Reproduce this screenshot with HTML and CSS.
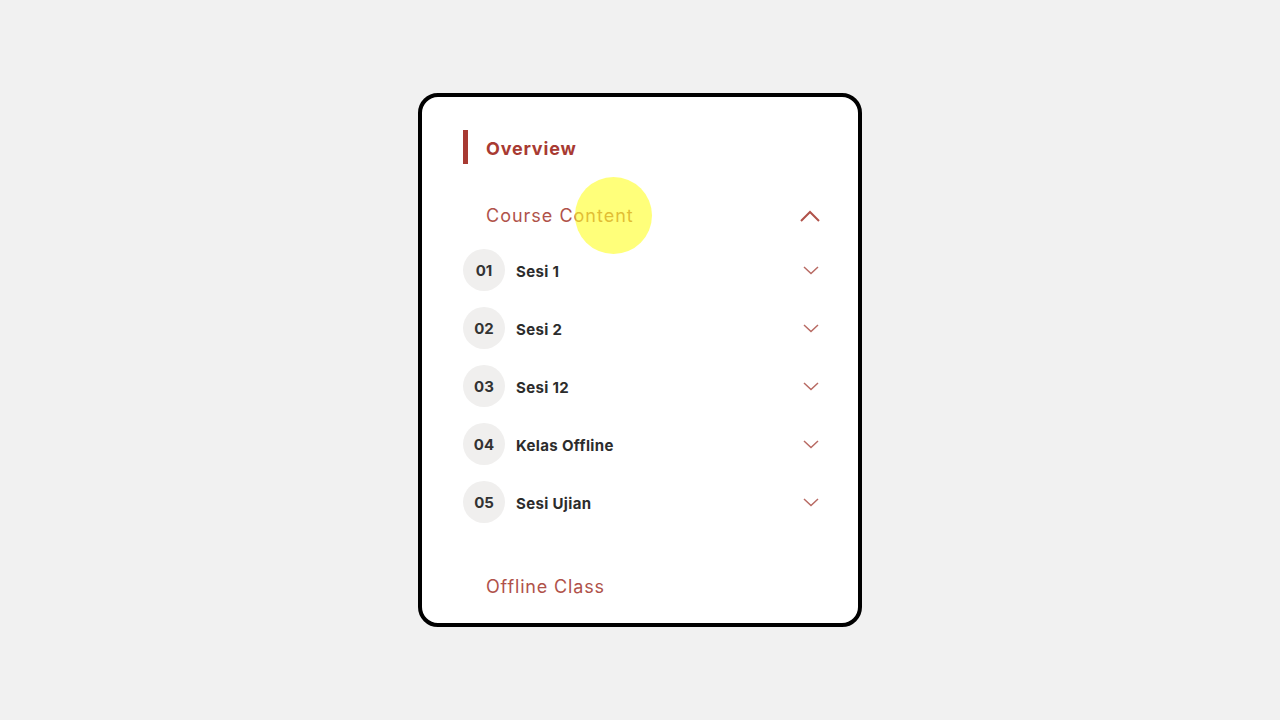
FILE: index.html
```html
<!DOCTYPE html>
<html lang="en">
<head>
    <meta charset="UTF-8">
    <meta name="viewport" content="width=device-width, initial-scale=1.0">
    <title>Course Menu</title>
    <link rel="stylesheet" href="styles.css">
</head>
<body>
    <div class="card">
        <!-- Active tab -->
        <div class="overview">Overview</div>

        <!-- Course content section -->
        <div class="section-head">
            <span>Course Content</span>
            <svg class="chev-up" width="22" height="12" viewBox="0 0 22 12">
                <path d="M2 11 L11 2 L20 11" fill="none" stroke="#b0524a" stroke-width="2"/>
            </svg>
            <div class="cursor-dot"></div>
        </div>

        <div class="sessions">
            <div class="session">
                <div class="num">01</div>
                <div class="label">Sesi 1</div>
                <svg class="chev" width="16" height="9" viewBox="0 0 16 9"><path d="M1 1 L8 7.5 L15 1" fill="none" stroke="#b86a63" stroke-width="1.5"/></svg>
            </div>
            <div class="session">
                <div class="num">02</div>
                <div class="label">Sesi 2</div>
                <svg class="chev" width="16" height="9" viewBox="0 0 16 9"><path d="M1 1 L8 7.5 L15 1" fill="none" stroke="#b86a63" stroke-width="1.5"/></svg>
            </div>
            <div class="session">
                <div class="num">03</div>
                <div class="label">Sesi 12</div>
                <svg class="chev" width="16" height="9" viewBox="0 0 16 9"><path d="M1 1 L8 7.5 L15 1" fill="none" stroke="#b86a63" stroke-width="1.5"/></svg>
            </div>
            <div class="session">
                <div class="num">04</div>
                <div class="label">Kelas Offline</div>
                <svg class="chev" width="16" height="9" viewBox="0 0 16 9"><path d="M1 1 L8 7.5 L15 1" fill="none" stroke="#b86a63" stroke-width="1.5"/></svg>
            </div>
            <div class="session">
                <div class="num">05</div>
                <div class="label">Sesi Ujian</div>
                <svg class="chev" width="16" height="9" viewBox="0 0 16 9"><path d="M1 1 L8 7.5 L15 1" fill="none" stroke="#b86a63" stroke-width="1.5"/></svg>
            </div>
        </div>

        <div class="section-link">Offline Class</div>
    </div>
</body>
</html>
```

FILE: styles.css
```css
body {
    font-family: Inter, "Noto Sans", sans-serif;
    margin: 0;
    background: #f1f1f1;
    height: 100vh;
    display: flex;
    justify-content: center;
    align-items: center;
}
.card {
    box-sizing: border-box;
    width: 444px;
    height: 534px;
    background: #fff;
    border: 4px solid #000;
    border-radius: 20px;
    padding: 33px 37px 0 41px;
}
.overview {
    height: 34px;
    border-left: 5px solid #a83a32;
    padding-left: 18px;
    display: flex;
    align-items: center;
    font-size: 18px;
    font-weight: 700;
    letter-spacing: 0.8px;
    color: #a83a32;
    padding-top: 2px;
    box-sizing: border-box;
}
.section-head {
    position: relative;
    margin-top: 31px;
    height: 40px;
    padding-left: 23px;
    display: flex;
    align-items: center;
    justify-content: space-between;
    font-size: 18px;
    letter-spacing: 1px;
    color: #b0524a;
}
.chev-up {
    margin-top: 1px;
}
.cursor-dot {
    position: absolute;
    left: 112px;
    top: -18px;
    width: 77px;
    height: 77px;
    border-radius: 50%;
    background: rgba(255, 255, 40, 0.62);
}
.sessions {
    margin-top: 7px;
}
.session {
    height: 58px;
    display: flex;
    align-items: center;
}
.num {
    width: 42px;
    height: 42px;
    border-radius: 50%;
    background: #f0efee;
    display: flex;
    align-items: center;
    justify-content: center;
    font-size: 15px;
    font-weight: 700;
    color: #333;
    margin-top: -2px;
}
.label {
    flex: 1;
    margin-left: 11px;
    font-size: 15px;
    font-weight: 700;
    letter-spacing: 0.35px;
    color: #2c2c2c;
}
.chev {
    margin-right: 2px;
    margin-top: -2px;
}
.section-link {
    margin-top: 34px;
    height: 40px;
    padding-left: 23px;
    display: flex;
    align-items: center;
    font-size: 18px;
    letter-spacing: 0.85px;
    color: #b0524a;
}
```
